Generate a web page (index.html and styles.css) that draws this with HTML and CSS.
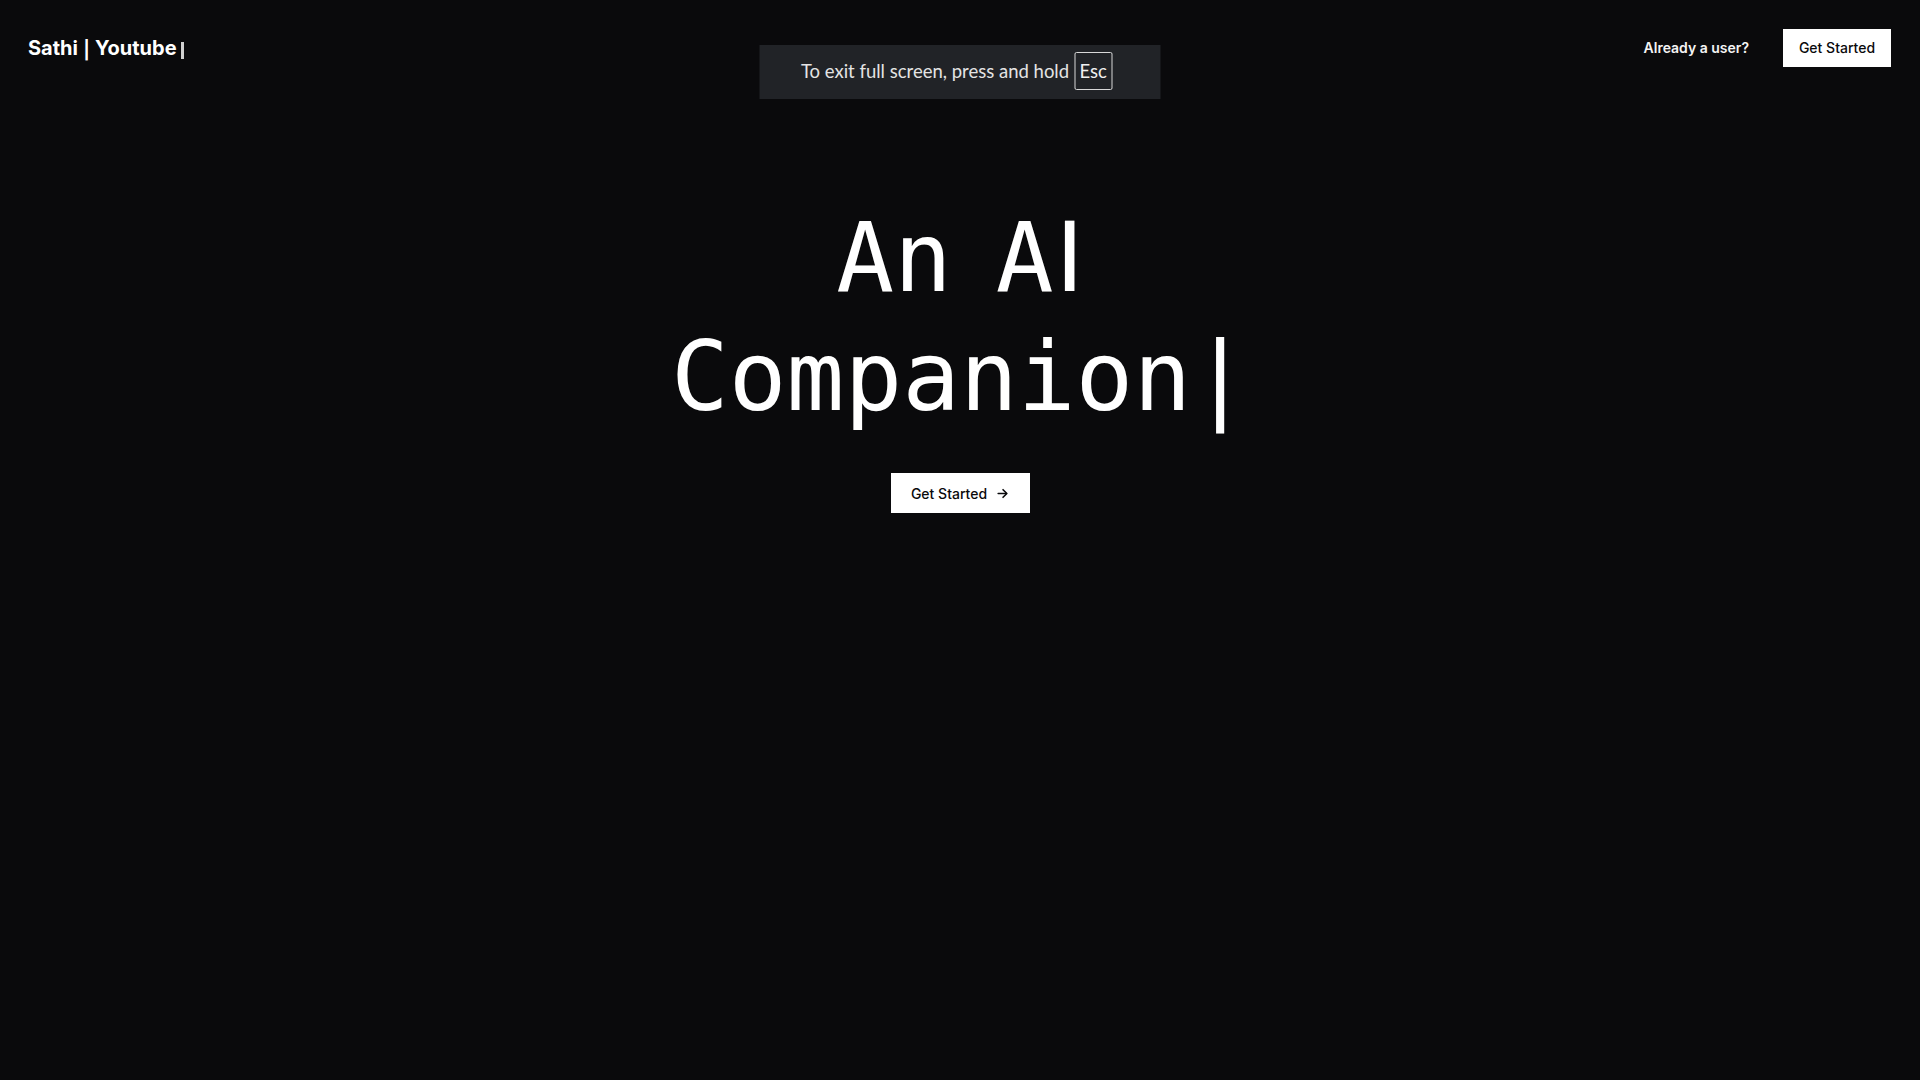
FILE: index.html
```html
<!DOCTYPE html>
<html lang="en">
<head>
<meta charset="utf-8">
<title>Sathi | Youtube</title>
<link rel="stylesheet" href="styles.css">
</head>
<body>
<header class="nav">
  <div class="logo">Sathi <span class="sep">|</span> Youtube<span class="caret"></span></div>
  <div class="nav-right">
    <a class="login" href="#">Already a user?</a>
    <a class="btn btn-nav" href="#">Get Started</a>
  </div>
</header>
<main class="hero">
  <h1 class="title"><span class="line1">An A<span class="cap-i">I</span></span><br>Companion|</h1>
  <a class="btn btn-hero" href="#">Get Started
    <svg class="arrow" width="13" height="13" viewBox="0 0 24 24" fill="none" stroke="currentColor" stroke-width="3" stroke-linecap="round" stroke-linejoin="round"><path d="M4 12h15"/><path d="M13 5l7 7-7 7"/></svg>
  </a>
</main>
<div class="fs-toast">To exit full screen, press and hold <span class="key">Esc</span></div>
</body>
</html>
```
FILE: styles.css
```css
html, body {
  margin: 0;
  padding: 0;
  background: #0a0a0c;
  color: #fff;
  height: 100%;
}
body {
  font-family: Inter, "Liberation Sans", sans-serif;
  min-height: 1080px;
  position: relative;
}
a { text-decoration: none; color: inherit; }

.nav {
  display: flex;
  justify-content: space-between;
  align-items: center;
  padding: 29px 29px 29px 28px;
}
.logo {
  font-size: 20px;
  font-weight: 700;
  line-height: 24px;
  white-space: pre;
}
.sep {
  font-weight: 700;
  font-family: "DejaVu Sans", sans-serif;
  font-size: 21px;
}
.caret {
  display: inline-block;
  width: 3px;
  height: 17px;
  background: #d0d0d0;
  margin-left: 4px;
  vertical-align: -4px;
}
.nav-right {
  display: flex;
  align-items: center;
  gap: 34px;
}
.login {
  font-size: 14px;
  font-weight: 600;
  color: #f4f4f4;
  padding-bottom: 2px;
}
.btn {
  background: #fff;
  color: #0a0a0c;
  font-weight: 500;
  font-size: 14px;
  display: inline-flex;
  align-items: center;
  justify-content: center;
}
.btn-nav {
  width: 108px;
  height: 38px;
  box-sizing: border-box;
  padding-bottom: 2px;
}
.hero {
  display: flex;
  flex-direction: column;
  align-items: center;
  padding-top: 103px;
}
.title {
  margin: 0;
  font-family: "DejaVu Sans Mono", "Liberation Mono", monospace;
  font-weight: 400;
  font-size: 96px;
  line-height: 119px;
  text-align: center;
}
.line1 { word-spacing: -14px; }
.cap-i {
  font-family: "DejaVu Sans", "Liberation Sans", sans-serif;
  margin-left: 2px;
}
.btn-hero {
  margin-top: 36px;
  width: 139px;
  height: 40px;
  gap: 9px;
}
.arrow { display: block; }

.fs-toast {
  position: absolute;
  top: 45px;
  left: 50%;
  transform: translateX(-50%);
  width: 401px;
  height: 54px;
  box-sizing: border-box;
  padding: 0 7px 2px 0;
  background: #212327;
  color: #e4e4e4;
  font-family: Lato, "Open Sans", sans-serif;
  font-size: 18.5px;
  display: flex;
  align-items: center;
  justify-content: center;
  gap: 5px;
}
.key {
  border: 1px solid #d8d8d8;
  border-radius: 2px;
  width: 38px;
  height: 38px;
  box-sizing: border-box;
  display: inline-flex;
  align-items: center;
  justify-content: center;
  color: #f0f0f0;
}
```
